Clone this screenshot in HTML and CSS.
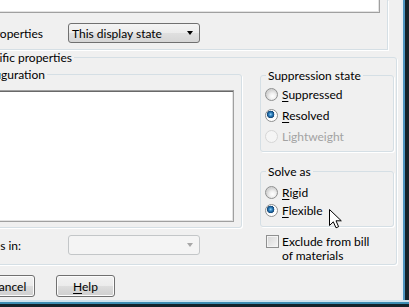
FILE: index.html
```html
<!DOCTYPE html>
<html lang="en">
<head>
  <meta charset="UTF-8">
  <title>Component Properties</title>
  <link rel="stylesheet" href="styles.css">
</head>
<body>

  <div class="screen">
    <div class="window">
      <div class="client">

        <!-- display state part -->
        <div class="top-group">
          <div class="notes"></div>
          <div class="field-row">
            <label class="cut-label state-label"><span>Change display properties</span></label>
            <div class="combo"><span>This display state</span><i class="arrow"></i></div>
          </div>
        </div>

        <!-- configuration part -->
        <fieldset class="group props-group">
          <legend class="cut-label props-legend"><span>Configuration specific properties</span></legend>
          <div class="props-grid">
            <div class="left-col">
              <fieldset class="group config-group">
                <legend class="cut-label config-legend"><span>Referenced configuration</span></legend>
                <div class="listbox"></div>
              </fieldset>
              <div class="field-row bom-row">
                <label class="cut-label bom-label"><span>Change properties in:</span></label>
                <div class="combo disabled"><span></span><i class="arrow"></i></div>
              </div>
            </div>

            <div class="right-col">
              <fieldset class="group side-group suppress-group">
                <legend>Suppression state</legend>
                <div class="radio-row"><span class="radio"></span><span><u>S</u>uppressed</span></div>
                <div class="radio-row"><span class="radio on"></span><span><u>R</u>esolved</span></div>
                <div class="radio-row off"><span class="radio"></span><span>Lightweight</span></div>
              </fieldset>
              <fieldset class="group side-group solve-group">
                <legend>Solve as</legend>
                <div class="radio-row short"><span class="radio"></span><span><u>R</u>igid</span></div>
                <div class="radio-row short"><span class="radio on"></span><span><u>F</u>lexible</span></div>
              </fieldset>
              <div class="check-row">
                <span class="checkbox"></span>
                <span>Exclude from bill<br>of materials</span>
              </div>
            </div>
          </div>
        </fieldset>

        <div class="buttons">
          <button class="btn cancel">Cancel</button>
          <button class="btn"><u>H</u>elp</button>
        </div>
      </div>
      <div class="frame-right"></div>

      <svg class="cursor" width="13" height="20" viewBox="0 0 13 20">
        <path d="M0.5 0.5 V16.5 L4.3 12.8 L7 18.8 L9.6 17.7 L7 11.8 H12.3 Z" fill="#fff" stroke="#000" stroke-width="1" stroke-linejoin="miter"/>
      </svg>
    </div>
    <div class="frame-bottom"></div>
  </div>

</body>
</html>
```

FILE: styles.css
```css
* {
  margin: 0;
  padding: 0;
  box-sizing: border-box;
}

html, body {
  width: 409px;
  height: 307px;
  overflow: hidden;
}

body {
  font-family: Lato, "Noto Sans", sans-serif;
  font-size: 12px;
  color: #000;
  background: #14232b;
}

.screen {
  display: flex;
  flex-direction: column;
  height: 307px;
}

.window {
  position: relative;
  display: flex;
  height: 300px;
}

.client {
  width: 401px;
  background: #f0f0f0;
  overflow: hidden;
}

.frame-right {
  width: 8px;
  background: linear-gradient(to right, #e4edf3 0 2px, #4d95c2 2px 4px, #14232b 4px);
}

.frame-bottom {
  height: 7px;
  background: linear-gradient(#cfe2ee 0 2px, #3d8db3 2px 4px, #14232b 4px);
}

/* shared bits */
.cut-label {
  display: flex;
  justify-content: flex-end;
  overflow: hidden;
  white-space: nowrap;
  line-height: 15px;
}

.field-row {
  display: flex;
  align-items: center;
}

.group {
  min-width: 0;
  border: 1px solid #d5dfe5;
  border-radius: 3px;
  box-shadow: 1px 1px 0 #fff;
}

.group legend {
  line-height: 15px;
  padding: 0 2px;
}

.combo {
  width: 132px;
  height: 20px;
  display: flex;
  align-items: center;
  justify-content: space-between;
  padding: 0 6px 0 3px;
  border: 1px solid #707070;
  border-radius: 3px;
  background: linear-gradient(#f4f4f4, #ececec 50%, #e0e0e0 50%, #d6d6d6);
  white-space: nowrap;
}

.arrow {
  width: 0;
  height: 0;
  border-left: 3.5px solid transparent;
  border-right: 3.5px solid transparent;
  border-top: 4px solid #000;
}

.combo.disabled {
  border-color: #c3c6c8;
  background: #f4f4f4;
}

.combo.disabled .arrow {
  border-top-color: #a7a7a7;
}

/* top part */
.top-group {
  width: 408px;
  margin-left: -20px;
  padding: 0 7px 6px;
  border: 1px solid #d5dfe5;
  border-top: none;
  box-shadow: 1px 1px 0 #fff;
}

.notes {
  height: 13px;
  background: #fff;
  border: 1px solid #a0a0a0;
  border-top: none;
  box-shadow: inset -1px -1px 0 #e3e3e3;
}

.top-group .field-row {
  margin-top: 10px;
}

.state-label {
  width: 55px;
  margin-right: 25px;
}

/* configuration part */
.props-group {
  width: 427px;
  margin-left: -30px;
  padding: 0 2px 0 8px;
}

.props-group > legend {
  width: 95px;
  padding: 0 2px 0 0;
}

.props-grid {
  display: grid;
  grid-template-columns: 263px 134px;
  column-gap: 18px;
  height: 199px;
}

.config-group {
  margin-top: 2px;
  padding: 0 7px 5px 8px;
}

.config-group > legend {
  width: 59px;
  padding: 0 2px 0 0;
}

.listbox {
  height: 132px;
  margin-top: 8px;
  background: #fff;
  border: 1px solid #a0a0a0;
  box-shadow: inset 1px 1px 0 #696969, inset -1px -1px 0 #e3e3e3;
}

.bom-row {
  margin-top: 7px;
}

.bom-label {
  width: 42px;
  margin-right: 47px;
}

.side-group {
  padding: 0 4px 4px;
}

.side-group legend {
  margin-left: 1px;
}

.suppress-group {
  margin-top: 3px;
}

.suppress-group .radio-row:first-of-type {
  margin-top: 1px;
}

.solve-group {
  margin-top: 12px;
  padding-bottom: 7px;
}

.solve-group .radio-row:first-of-type {
  margin-top: 4px;
}

.radio-row {
  display: flex;
  align-items: center;
  gap: 4px;
  height: 21px;
}

.radio-row.short {
  height: 18px;
}

.radio-row.off {
  color: #a3a3a3;
}

u {
  text-decoration-thickness: 1px;
  text-underline-offset: 2px;
}

.radio {
  flex: 0 0 13px;
  height: 13px;
  border-radius: 50%;
  border: 1px solid #8f9090;
  background: radial-gradient(circle at 60% 65%, #ffffff 0, #f0f0f0 3px, #d4d4d4 6px);
}

.radio.on {
  background: radial-gradient(circle at 42% 40%, #9fd6f6 0, #3588c6 1.5px, #0f4577 3.5px, #f6f6f6 4px, #ffffff 5.5px);
}

.radio-row.off .radio {
  border-color: #d6d6d6;
  background: #f5f5f5;
}

.check-row {
  display: flex;
  align-items: flex-start;
  gap: 3px;
  margin-top: 8px;
  padding-left: 6px;
  line-height: 14px;
}

.checkbox {
  flex: 0 0 13px;
  height: 13px;
  border: 1px solid #8f9090;
  background: linear-gradient(135deg, #d6d6d6, #f6f6f6);
  box-shadow: inset 0 0 0 1px #f4f4f4;
}

/* buttons */
.buttons {
  display: flex;
  gap: 21px;
  margin: 10px 0 0 -24px;
}

.btn {
  width: 59px;
  height: 22px;
  font: inherit;
  color: #000;
  border: 1px solid #707070;
  border-radius: 3px;
  background: linear-gradient(#f2f2f2, #ebebeb 50%, #dddddd 50%, #cfcfcf);
  box-shadow: inset 0 0 0 1px #fcfcfc;
}

.btn.cancel {
  padding-left: 6px;
}

.cursor {
  position: absolute;
  left: 329px;
  top: 209px;
}
```
